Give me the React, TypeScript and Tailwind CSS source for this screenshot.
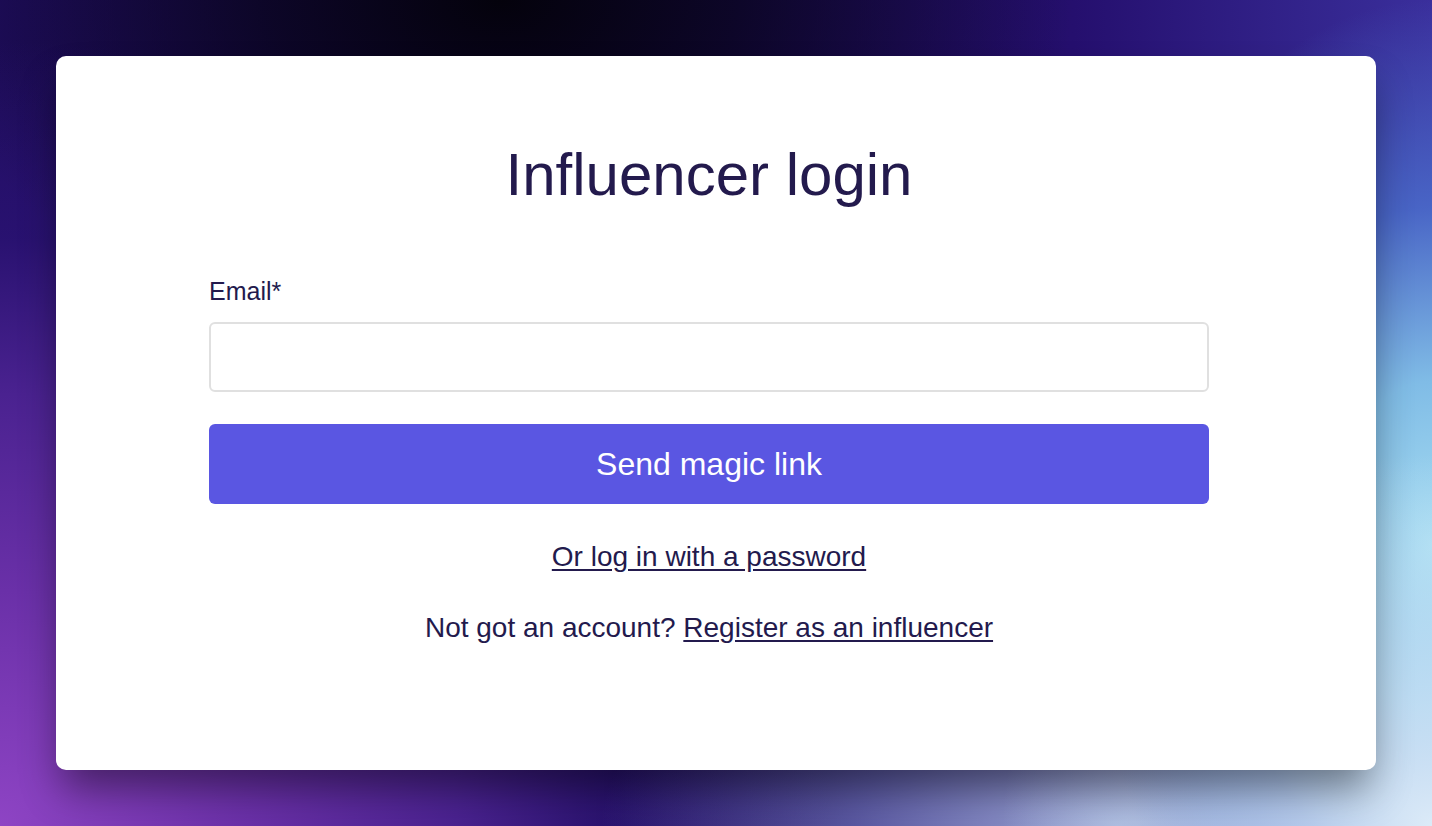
import React from "react";

export default function App() {
  return (
    <div
      className="h-[826px] w-full p-14 bg-[radial-gradient(ellipse_30%_45%_at_100%_100%,#dcebf8_0%,rgba(205,228,246,0.6)_50%,transparent_100%),radial-gradient(ellipse_24%_66%_at_100%_66%,#a8def2_0%,#80bce6_30%,rgba(75,110,205,0.85)_62%,transparent_100%),radial-gradient(ellipse_36%_30%_at_78%_100%,#a2aed9_0%,rgba(130,140,205,0.6)_50%,transparent_100%),radial-gradient(ellipse_58%_95%_at_0%_100%,#8e44c4_0%,#6a30a8_30%,#4a2290_55%,rgba(50,22,130,0.5)_75%,transparent_100%),radial-gradient(ellipse_40%_45%_at_35%_0%,#04020c_0%,rgba(8,4,26,0.8)_40%,transparent_100%),linear-gradient(90deg,#1f0d5e_0%,#1c0c55_40%,#250f6e_75%,#3a2f9c_100%)]"
      style={{ fontFamily: '"Liberation Sans", Arial, Helvetica, sans-serif' }}
    >
      <div className="h-full w-full rounded-[10px] bg-white shadow-[0_24px_40px_-6px_rgba(0,0,0,0.45)] pt-[89px]">
        <div className="ml-[153px] w-[1000px] flex flex-col text-[#231a4d]">
          <h1 className="text-center text-[60px] leading-[60px] font-normal">
            Influencer login
          </h1>
          <label className="mt-[71px] text-[25px] leading-[30px]">Email*</label>
          <input
            type="email"
            className="mt-4 h-[70px] w-full rounded-[6px] border-2 border-[#e0e0e0] bg-white px-4 text-[25px] outline-none"
          />
          <button className="mt-8 h-[80px] w-full rounded-[6px] bg-[#5a56e2] text-[32px] leading-[40px] text-white">
            Send magic link
          </button>
          <div className="mt-[33px] text-center text-[28px] leading-[40px]">
            <a href="#" className="underline underline-offset-[3px]">
              Or log in with a password
            </a>
          </div>
          <div className="mt-[31px] text-center text-[28px] leading-[40px]">
            Not got an account?{" "}
            <a href="#" className="underline underline-offset-[3px]">
              Register as an influencer
            </a>
          </div>
        </div>
      </div>
    </div>
  );
}
